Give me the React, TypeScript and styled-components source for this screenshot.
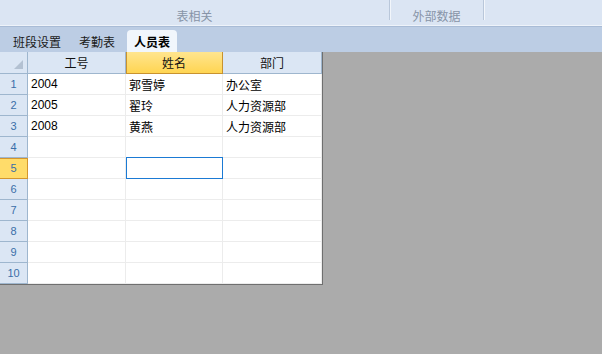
import React from 'react';
import styled, { createGlobalStyle, css } from 'styled-components';

const GlobalStyle = createGlobalStyle`
  html, body {
    margin: 0;
    padding: 0;
    background: #ababab;
    font-family: "Liberation Sans", "Noto Sans CJK SC", sans-serif;
    font-size: 12px;
  }
`;

const Page = styled.div`
  width: 602px;
  height: 354px;
  display: flex;
  flex-direction: column;
  overflow: hidden;
`;

const Ribbon = styled.div`
  height: 26px;
  background: #dbe5f3;
  border-bottom: 1px solid #a9bcd6;
  box-shadow: inset 0 -1px 0 #eef3fa;
  display: flex;
`;

const RibbonGroup = styled.div<{ $w: number }>`
  width: ${(p) => p.$w}px;
  display: flex;
  align-items: flex-end;
  justify-content: center;
  padding-bottom: 2px;
  color: #8794a7;
  font-size: 12px;
`;

const RibbonSep = styled.div`
  width: 1px;
  height: 20px;
  background: #b9c7da;
  box-shadow: 1px 0 0 #f2f6fb;
`;

const TabBar = styled.div`
  height: 25px;
  background: #bccde4;
  display: flex;
  align-items: flex-end;
  padding-left: 7px;
`;

const Tab = styled.div<{ $active?: boolean }>`
  height: 22px;
  padding: 0 6px;
  margin-right: 6px;
  display: flex;
  align-items: center;
  color: #1a1a1a;
  font-size: 12px;
  border-radius: 4px 4px 0 0;
  ${(p) =>
    p.$active &&
    css`
      background: #f1f6fc;
      font-weight: bold;
      color: #000;
      padding: 0 7px;
    `}
`;

const Sheet = styled.div`
  display: grid;
  grid-template-columns: 28px 98px 97px 99px;
  width: 322px;
  background: #fff;
  border-right: 1px solid #6f6f6f;
  border-bottom: 1px solid #6f6f6f;
`;

const HeadCell = styled.div<{ $sel?: boolean }>`
  height: 21px;
  display: flex;
  align-items: center;
  justify-content: center;
  background: #dbe6f4;
  border-right: 1px solid #9eb6ce;
  border-bottom: 1px solid #9eb6ce;
  color: #111;
  font-size: 12px;
  ${(p) =>
    p.$sel &&
    css`
      background: linear-gradient(#ffe58f, #ffd552);
      border-right-color: #c8922f;
      border-bottom-color: #c8922f;
      box-shadow: inset 1px 0 0 #c8922f;
    `}
`;

const Corner = styled(HeadCell)`
  position: relative;
  &::after {
    content: '';
    position: absolute;
    right: 4px;
    bottom: 4px;
    border-left: 9px solid transparent;
    border-bottom: 9px solid #b3c1d2;
  }
`;

const RowHead = styled.div<{ $sel?: boolean }>`
  height: 20px;
  display: flex;
  align-items: center;
  justify-content: center;
  background: #dbe6f4;
  border-right: 1px solid #9eb6ce;
  border-bottom: 1px solid #9eb6ce;
  color: #3a6ea8;
  font-size: 11px;
  ${(p) =>
    p.$sel &&
    css`
      background: #ffdc6a;
      border-right-color: #d4962d;
      border-bottom-color: #d4962d;
      box-shadow: inset 0 1px 0 #d4962d;
    `}
`;

const Cell = styled.div<{ $sel?: boolean }>`
  box-sizing: border-box;
  height: 21px;
  display: flex;
  align-items: center;
  padding-left: 3px;
  border-right: 1px solid #ececec;
  border-bottom: 1px solid #ececec;
  color: #000;
  font-size: 12px;
  ${(p) =>
    p.$sel &&
    css`
      margin-top: -1px;
      height: 22px;
      border: 1px solid #1b7ad4;
    `}
`;

const rows: string[][] = [
  ['2004', '郭雪婷', '办公室'],
  ['2005', '翟玲', '人力资源部'],
  ['2008', '黄燕', '人力资源部'],
  ['', '', ''],
  ['', '', ''],
  ['', '', ''],
  ['', '', ''],
  ['', '', ''],
  ['', '', ''],
  ['', '', ''],
];

const App: React.FC = () => {
  return (
    <Page>
      <GlobalStyle />
      <Ribbon>
        <RibbonGroup $w={389}>表相关</RibbonGroup>
        <RibbonSep />
        <RibbonGroup $w={93}>外部数据</RibbonGroup>
        <RibbonSep />
      </Ribbon>
      <TabBar>
        <Tab>班段设置</Tab>
        <Tab>考勤表</Tab>
        <Tab $active>人员表</Tab>
      </TabBar>
      <Sheet>
        <Corner />
        <HeadCell>工号</HeadCell>
        <HeadCell $sel>姓名</HeadCell>
        <HeadCell>部门</HeadCell>
        {rows.map((row, i) => (
          <React.Fragment key={i}>
            <RowHead $sel={i === 4}>{i + 1}</RowHead>
            {row.map((val, j) => (
              <Cell key={j} $sel={i === 4 && j === 1}>
                {val}
              </Cell>
            ))}
          </React.Fragment>
        ))}
      </Sheet>
    </Page>
  );
};

export default App;
